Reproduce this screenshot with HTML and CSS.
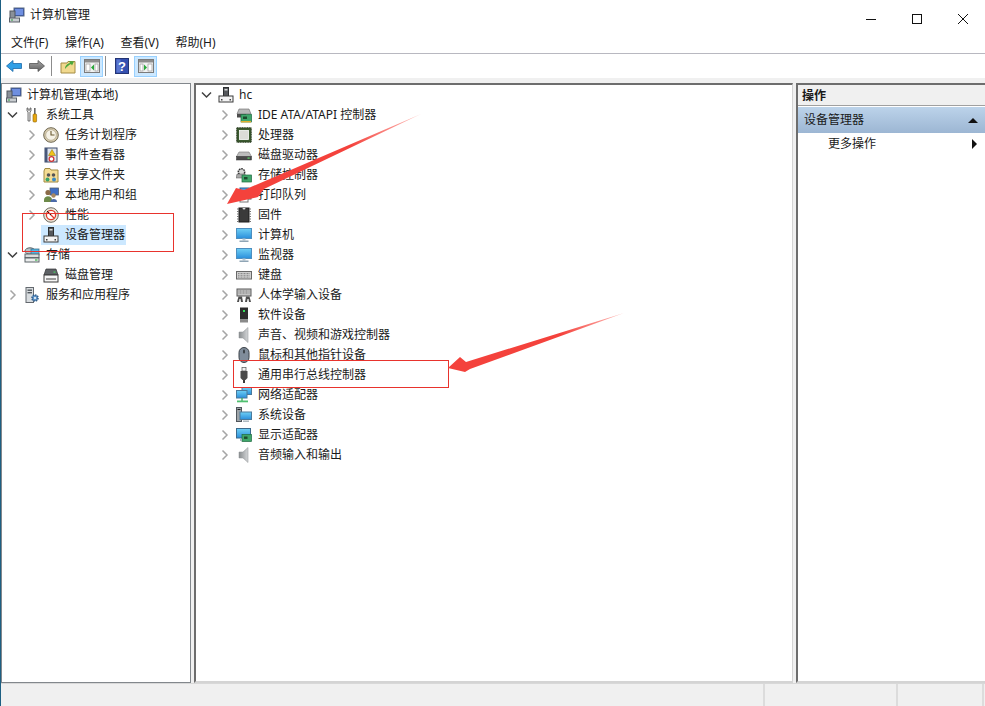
FILE: index.html
```html
<!DOCTYPE html>
<html lang="zh-CN">
<head>
<meta charset="utf-8">
<title>计算机管理</title>
<link rel="stylesheet" href="styles.css">
</head>
<body>
<svg class="defs" width="0" height="0" aria-hidden="true">
  <defs>
    <linearGradient id="gBlue" x1="0" y1="0" x2="0" y2="1"><stop offset="0" stop-color="#6fd0f5"/><stop offset="1" stop-color="#2a8edb"/></linearGradient>
    <linearGradient id="gGray" x1="0" y1="0" x2="0" y2="1"><stop offset="0" stop-color="#a8a8a8"/><stop offset="1" stop-color="#5e5e5e"/></linearGradient>
    <linearGradient id="gSpk" x1="0" y1="0" x2="1" y2="0"><stop offset="0" stop-color="#8a8e90"/><stop offset="1" stop-color="#d4d6d8"/></linearGradient>
    <symbol id="chev-r" viewBox="0 0 19 20"><path d="M5.500 5.500 L10 10 L5.500 14.500" fill="none" stroke="#a6a6a6" stroke-width="1.500"/></symbol>
    <symbol id="chev-d" viewBox="0 0 19 20"><path d="M3 7.500 L7.500 12 L12 7.500" fill="none" stroke="#404040" stroke-width="1.500"/></symbol>
    <symbol id="i-root" viewBox="0 0 16 16"><rect x="5" y="1" width="10" height="8" fill="#2d4fb5" stroke="#5a6a80"/><rect x="6" y="2" width="8" height="6" fill="#6f8fe0"/><rect x="1" y="4" width="5" height="8" fill="#8a9098" stroke="#50565e"/><rect x="0.500" y="11" width="10" height="4" fill="#c8ccd0" stroke="#5a6068"/><rect x="2" y="12.500" width="2" height="1" fill="#30a040"/></symbol>
    <symbol id="i-tools" viewBox="0 0 16 16"><path d="M3 1 v3 l1 1 v9 h2 v-9 l1-1 v-3 l-1 0 v2 h-2 v-2 z" fill="#e8e8e8" stroke="#555" stroke-width=".8"/><rect x="10" y="1" width="1.600" height="6" fill="#666"/><rect x="9" y="7" width="3.600" height="8" rx="1" fill="#e8a810" stroke="#8a6000" stroke-width=".6"/></symbol>
    <symbol id="i-clock" viewBox="0 0 16 16"><circle cx="8" cy="8" r="7.300" fill="#d8cdb0" stroke="#6e6650"/><circle cx="8" cy="8" r="5.300" fill="#f6f2e6" stroke="#a89c80" stroke-width=".6"/><path d="M8 4 V8 H11.500" fill="none" stroke="#6a5a30" stroke-width="1.100"/></symbol>
    <symbol id="i-event" viewBox="0 0 16 16"><rect x="2" y="1" width="12" height="14" fill="#dfe4ee" stroke="#3d4a68"/><rect x="2" y="1" width="2.500" height="14" fill="#47577a"/><path d="M9 2.500 L12.500 8.500 H5.500 Z" fill="#f2c418" stroke="#8a6d00" stroke-width=".5"/><circle cx="8.500" cy="12" r="2.400" fill="#fff" stroke="#d03030" stroke-width="1.200"/></symbol>
    <symbol id="i-share" viewBox="0 0 16 16"><path d="M1 4 V15 H15 V3 H8 L7 1.500 H2 Z" fill="#f4dc94" stroke="#a08a40"/><circle cx="5.500" cy="8" r="1.800" fill="#555"/><circle cx="10.500" cy="8" r="1.800" fill="#555"/><circle cx="4.500" cy="12.500" r="2" fill="#3ba46a"/><circle cx="11" cy="12.500" r="2" fill="#3b8ac4"/></symbol>
    <symbol id="i-users" viewBox="0 0 16 16"><rect x="7" y="1" width="8.500" height="7" fill="#3f6fc4" stroke="#536070" stroke-width=".8"/><circle cx="5" cy="5.500" r="2.600" fill="#8a6a48"/><path d="M1 13 C1 8 9 8 9 13 V15 H1 Z" fill="#6d8a4a"/><circle cx="10.500" cy="8.500" r="2.200" fill="#a88860"/><path d="M7.500 15 C7 11 14.500 11 14 15 Z" fill="#4a6aa8"/></symbol>
    <symbol id="i-perf" viewBox="0 0 16 16"><circle cx="8" cy="8" r="7.300" fill="#ece8dc" stroke="#6e6a60"/><circle cx="8" cy="8" r="4.600" fill="#fff" stroke="#e03a2a" stroke-width="1.300"/><path d="M5 5 L11 11" stroke="#e03a2a" stroke-width="1.300"/><path d="M4 4 L8 8" stroke="#222" stroke-width="1"/></symbol>
    <symbol id="i-devmgr" viewBox="0 0 16 16"><rect x="5.500" y="0.500" width="5" height="9" fill="#55585c" stroke="#2c2e30"/><rect x="6.500" y="2" width="3" height="1.500" fill="#d8d8d8"/><rect x="1" y="9" width="14" height="6" fill="#f4f4f4" stroke="#3a3a3a"/><rect x="3" y="12" width="1.500" height="1.500" fill="#444"/><rect x="11.500" y="12" width="1.500" height="1.500" fill="#444"/></symbol>
    <symbol id="i-storage" viewBox="0 0 16 16"><ellipse cx="6" cy="4" rx="5" ry="3.200" fill="#b8c4c8" stroke="#5c6468"/><rect x="7" y="2" width="8" height="6" fill="#4db8e8" stroke="#41708a" stroke-width=".8"/><rect x="1" y="7" width="14" height="3.600" fill="#d8dcdc" stroke="#5c6468"/><rect x="1" y="11" width="14" height="4" fill="#eceeee" stroke="#5c6468"/><rect x="11" y="12.400" width="2.500" height="1.200" fill="#38b048"/></symbol>
    <symbol id="i-disk" viewBox="0 0 16 16"><path d="M3 2 H13 L15 8 H1 Z" fill="#5e6266" stroke="#303234" stroke-width=".7"/><rect x="10.500" y="4.500" width="2" height="1.200" fill="#46d060"/><rect x="1" y="8" width="14" height="7" fill="#f6f6f6" stroke="#3a3a3a"/><rect x="3" y="11" width="10" height="2" fill="#9a9a9a"/></symbol>
    <symbol id="i-svc" viewBox="0 0 16 16"><rect x="2" y="0.500" width="7.500" height="15" fill="#d8dcdf" stroke="#63686e"/><rect x="3.500" y="2.500" width="4.500" height="1.400" fill="#50565c"/><rect x="3.500" y="5" width="4.500" height="1.400" fill="#50565c"/><circle cx="11" cy="11" r="3" fill="#5d93c8" stroke="#34608c" stroke-width="1.600" stroke-dasharray="1.500 .8"/><circle cx="11" cy="11" r="1" fill="#fff"/></symbol>
    <symbol id="i-ide" viewBox="0 0 16 16"><path d="M3 2 H13 L15 7 H1 Z" fill="#b8b8b8" stroke="#666" stroke-width=".6"/><rect x="1" y="7" width="9" height="3.500" fill="#4c4c4c"/><rect x="5" y="7.500" width="10.500" height="7.500" fill="#3fa66a" stroke="#1f6a40" stroke-width=".7"/><rect x="7" y="9.500" width="4" height="2.500" fill="#1c4a2e"/><rect x="5" y="14" width="10" height="1.400" fill="#e0b030"/></symbol>
    <symbol id="i-cpu" viewBox="0 0 16 16"><rect x="0.800" y="0.800" width="14.400" height="14.400" fill="#3c5a30" stroke="#22341a" stroke-dasharray="1.200 .5"/><rect x="3.500" y="3.500" width="9" height="9" fill="#dcdcd8" stroke="#fff" stroke-width=".8"/></symbol>
    <symbol id="i-drive" viewBox="0 0 16 16"><path d="M3 5 H13 L15.500 9.500 H0.500 Z" fill="#bcbcbc" stroke="#777" stroke-width=".6"/><rect x="0.500" y="9.500" width="15" height="3.500" fill="#4a4a4a" stroke="#333" stroke-width=".5"/><rect x="11.500" y="10.500" width="2.200" height="1.200" fill="#5ee06a"/></symbol>
    <symbol id="i-sctrl" viewBox="0 0 16 16"><circle cx="5.500" cy="5" r="3.200" fill="#d8d8d8" stroke="#333" stroke-width="1.500" stroke-dasharray="1.600 .8"/><path d="M1 7 H9 L10 11 H0 Z" fill="#a8a8a8" stroke="#555" stroke-width=".5"/><rect x="6" y="8" width="9.500" height="7" fill="#3fa66a" stroke="#1f6a40" stroke-width=".7"/><rect x="8" y="10" width="3.500" height="2.400" fill="#1c4a2e"/></symbol>
    <symbol id="i-print" viewBox="0 0 16 16"><rect x="4" y="1" width="9" height="5" fill="#4aa0e8" stroke="#2a5e94"/><rect x="1" y="6" width="14" height="6" fill="#b0b8c0" stroke="#555"/><rect x="4" y="11" width="8" height="4" fill="#fff" stroke="#777"/></symbol>
    <symbol id="i-chip" viewBox="0 0 16 16"><rect x="3" y="1" width="10" height="14" fill="#3a3a3a" stroke="#1c1c1c"/><path d="M1 2 H3 M1 4.500 H3 M1 7 H3 M1 9.500 H3 M1 12 H3 M1 14.500 H3 M13 2 H15 M13 4.500 H15 M13 7 H15 M13 9.500 H15 M13 12 H15 M13 14.500 H15" stroke="#777" stroke-width="1.100"/><path d="M6.500 1 a1.500 1.500 0 0 0 3 0 z" fill="#ddd"/></symbol>
    <symbol id="i-pc" viewBox="0 0 16 16"><rect x="0.500" y="1.500" width="15" height="10" fill="url(#gBlue)" stroke="#4d8fc0"/><path d="M6.500 11.500 H9.500 V13.500 H6.500 Z" fill="#b8c8d4"/><rect x="3.500" y="13.500" width="9" height="1.500" fill="#8fa5b5"/></symbol>
    <symbol id="i-kbd" viewBox="0 0 16 16"><rect x="0.500" y="4.500" width="15" height="7.500" fill="#d0d0d0" stroke="#686868"/><path d="M2 6.500 H14 M2 8.300 H14 M2 10.100 H14" stroke="#8a8a8a" stroke-width="1" stroke-dasharray="1 .5"/></symbol>
    <symbol id="i-hid" viewBox="0 0 16 16"><rect x="1" y="2" width="14" height="7" fill="#c4c4c4" stroke="#5a5a5a"/><path d="M2.500 4 H13.500 M2.500 6 H13.500" stroke="#808080" stroke-dasharray="1 .5"/><path d="M1 15 L2.500 9.500 H6 L7 15 H5 L4.500 12 H3.500 L3 15 Z" fill="#4e4e4e"/><path d="M9 15 L10 9.500 H13.500 L15 15 H13 L12.500 12 H11.500 L11 15 Z" fill="#4e4e4e"/></symbol>
    <symbol id="i-soft" viewBox="0 0 16 16"><rect x="4" y="0.500" width="8" height="12" fill="#2e2e2e"/><rect x="7" y="3" width="2" height="2" fill="#35e05a"/><rect x="4" y="12.500" width="8" height="3" fill="#8a8a8a"/></symbol>
    <symbol id="i-spk" viewBox="0 0 16 16"><path d="M3 5 H7 L12 0.500 V15.500 L7 11 H3 Z" fill="url(#gSpk)" stroke="#8a8e90" stroke-width=".5"/></symbol>
    <symbol id="i-mouse" viewBox="0 0 16 16"><rect x="3" y="0.500" width="10" height="15" rx="5" fill="#7f8c9a" stroke="#3c4248"/><rect x="7" y="2.500" width="2" height="4" rx="1" fill="#3c4248"/></symbol>
    <symbol id="i-usb" viewBox="0 0 16 16"><rect x="6" y="0.500" width="4" height="3.500" fill="#f2f2f2" stroke="#555" stroke-width=".7"/><path d="M4.500 4 H11.500 V11 L9.500 13 H6.500 L4.500 11 Z" fill="#4a4a4a"/><rect x="7" y="13" width="2" height="3" fill="#3a3a3a"/></symbol>
    <symbol id="i-net" viewBox="0 0 16 16"><rect x="6" y="0.500" width="9.500" height="7" fill="url(#gBlue)" stroke="#4a7a9c"/><rect x="0.500" y="3.500" width="10.500" height="7.500" fill="url(#gBlue)" stroke="#4a7a9c"/><path d="M6 11 V14" stroke="#40b060" stroke-width="1.400"/><rect x="1" y="13.500" width="11" height="1.800" fill="#50c070"/></symbol>
    <symbol id="i-sys" viewBox="0 0 16 16"><rect x="0.500" y="0.500" width="5" height="14" fill="#9ea4a8" stroke="#50565c"/><rect x="1.500" y="2" width="3" height="1" fill="#222"/><rect x="4" y="5" width="11.500" height="7.500" fill="url(#gBlue)" stroke="#4a7a9c"/><rect x="7" y="13.500" width="6" height="1.400" fill="#a8b4bc"/></symbol>
    <symbol id="i-disp" viewBox="0 0 16 16"><rect x="0.500" y="1.500" width="14" height="9.500" fill="url(#gBlue)" stroke="#3c6a8c"/><rect x="6" y="7.500" width="9.500" height="7" fill="#3fa66a" stroke="#1f6a40" stroke-width=".7"/><rect x="8" y="9.500" width="3.500" height="2.400" fill="#1c4a2e"/><rect x="4" y="12" width="2" height="2" fill="#a8b4bc"/></symbol>
  </defs>
</svg>

<div class="app">
  <header class="titlebar">
    <svg class="ico title-ico"><use href="#i-root"/></svg>
    <span class="title-text">计算机管理</span>
    <div class="winbtns">
      <svg class="winbtn" viewBox="0 0 46 20"><path d="M18 14.500 H28" stroke="#111" fill="none"/></svg>
      <svg class="winbtn" viewBox="0 0 46 20"><rect x="18.500" y="9.500" width="9" height="9" fill="none" stroke="#111"/></svg>
      <svg class="winbtn" viewBox="0 0 46 20"><path d="M18 9 L28 19 M28 9 L18 19" fill="none" stroke="#111"/></svg>
    </div>
  </header>
  <nav class="menubar">
    <span>文件(F)</span><span>操作(A)</span><span>查看(V)</span><span>帮助(H)</span>
  </nav>
  <div class="toolbar">
    <svg class="tool" viewBox="0 0 16 16"><path d="M0.500 8 L7 2.500 V5.500 H15.500 V10.500 H7 V13.500 Z" fill="#2f9fe6" stroke="#1c6aa8" stroke-width=".8"/></svg>
    <svg class="tool tool-fwd" viewBox="0 0 16 16"><path d="M15.500 8 L9 2.500 V5.500 H0.500 V10.500 H9 V13.500 Z" fill="url(#gGray)" stroke="#555" stroke-width=".8"/></svg>
    <i class="tsep"></i>
    <svg class="tool tool-up" viewBox="0 0 16 16"><path d="M1 5 H7 L8 3.500 H15 V15 H1 Z" fill="#f1d98e" stroke="#a48c44"/><path d="M5 11 C5 7 8 5.500 10 5 L9 3 L14 3.500 L12 7.500 L11 6 C9 7 7 8.500 5 11 Z" fill="#4aa83c"/></svg>
    <span class="tbtn tbtn-a"><svg class="tool" viewBox="0 0 16 16"><rect x="0.500" y="1.500" width="15" height="13" fill="#f2f2f2" stroke="#7b7b7b"/><rect x="1" y="2" width="14" height="2.500" fill="#8d8d8d"/><rect x="2" y="6" width="4" height="7" fill="#fff" stroke="#999" stroke-width=".7"/><rect x="11" y="6" width="3" height="7" fill="#fff" stroke="#999" stroke-width=".7"/><path d="M10 6.500 L7 9.500 L10 12.500 Z" fill="#29a83a"/></svg></span>
    <i class="tsep tsep-b"></i>
    <svg class="tool tool-help" viewBox="0 0 16 16"><rect x="1.500" y="0.500" width="13" height="15" fill="#3550b0" stroke="#233474"/><rect x="2.500" y="1.500" width="4" height="13" fill="#5a76cf"/><text x="8" y="12.500" class="help-q">?</text></svg>
    <span class="tbtn tbtn-b"><svg class="tool" viewBox="0 0 16 16"><rect x="0.500" y="1.500" width="15" height="13" fill="#f2f2f2" stroke="#7b7b7b"/><rect x="1" y="2" width="14" height="2.500" fill="#8d8d8d"/><rect x="2" y="6" width="3" height="7" fill="#fff" stroke="#999" stroke-width=".7"/><rect x="10" y="6" width="4" height="7" fill="#fff" stroke="#999" stroke-width=".7"/><path d="M6 6.500 L9 9.500 L6 12.500 Z" fill="#29a83a"/></svg></span>
  </div>

  <main class="panes">
    <section class="pane pane-left">
      <div class="row l0"><svg class="ico"><use href="#i-root"/></svg><span>计算机管理(本地)</span></div>
      <div class="row l1"><svg class="tw"><use href="#chev-d"/></svg><svg class="ico"><use href="#i-tools"/></svg><span>系统工具</span></div>
      <div class="row l2"><svg class="tw"><use href="#chev-r"/></svg><svg class="ico"><use href="#i-clock"/></svg><span>任务计划程序</span></div>
      <div class="row l2"><svg class="tw"><use href="#chev-r"/></svg><svg class="ico"><use href="#i-event"/></svg><span>事件查看器</span></div>
      <div class="row l2"><svg class="tw"><use href="#chev-r"/></svg><svg class="ico"><use href="#i-share"/></svg><span>共享文件夹</span></div>
      <div class="row l2"><svg class="tw"><use href="#chev-r"/></svg><svg class="ico"><use href="#i-users"/></svg><span>本地用户和组</span></div>
      <div class="row l2"><svg class="tw"><use href="#chev-r"/></svg><svg class="ico"><use href="#i-perf"/></svg><span>性能</span></div>
      <div class="row l2"><i class="tw"></i><span class="sel"><svg class="ico"><use href="#i-devmgr"/></svg><span>设备管理器</span></span></div>
      <div class="row l1"><svg class="tw"><use href="#chev-d"/></svg><svg class="ico"><use href="#i-storage"/></svg><span>存储</span></div>
      <div class="row l2"><i class="tw"></i><svg class="ico"><use href="#i-disk"/></svg><span>磁盘管理</span></div>
      <div class="row l1"><svg class="tw"><use href="#chev-r"/></svg><svg class="ico"><use href="#i-svc"/></svg><span>服务和应用程序</span></div>
    </section>

    <section class="pane pane-mid">
      <div class="row m0"><svg class="tw"><use href="#chev-d"/></svg><svg class="ico"><use href="#i-devmgr"/></svg><span>hc</span></div>
      <div class="row m1"><svg class="tw"><use href="#chev-r"/></svg><svg class="ico"><use href="#i-ide"/></svg><span>IDE ATA/ATAPI 控制器</span></div>
      <div class="row m1"><svg class="tw"><use href="#chev-r"/></svg><svg class="ico"><use href="#i-cpu"/></svg><span>处理器</span></div>
      <div class="row m1"><svg class="tw"><use href="#chev-r"/></svg><svg class="ico"><use href="#i-drive"/></svg><span>磁盘驱动器</span></div>
      <div class="row m1"><svg class="tw"><use href="#chev-r"/></svg><svg class="ico"><use href="#i-sctrl"/></svg><span>存储控制器</span></div>
      <div class="row m1"><svg class="tw"><use href="#chev-r"/></svg><svg class="ico"><use href="#i-print"/></svg><span>打印队列</span></div>
      <div class="row m1"><svg class="tw"><use href="#chev-r"/></svg><svg class="ico"><use href="#i-chip"/></svg><span>固件</span></div>
      <div class="row m1"><svg class="tw"><use href="#chev-r"/></svg><svg class="ico"><use href="#i-pc"/></svg><span>计算机</span></div>
      <div class="row m1"><svg class="tw"><use href="#chev-r"/></svg><svg class="ico"><use href="#i-pc"/></svg><span>监视器</span></div>
      <div class="row m1"><svg class="tw"><use href="#chev-r"/></svg><svg class="ico"><use href="#i-kbd"/></svg><span>键盘</span></div>
      <div class="row m1"><svg class="tw"><use href="#chev-r"/></svg><svg class="ico"><use href="#i-hid"/></svg><span>人体学输入设备</span></div>
      <div class="row m1"><svg class="tw"><use href="#chev-r"/></svg><svg class="ico"><use href="#i-soft"/></svg><span>软件设备</span></div>
      <div class="row m1"><svg class="tw"><use href="#chev-r"/></svg><svg class="ico"><use href="#i-spk"/></svg><span>声音、视频和游戏控制器</span></div>
      <div class="row m1"><svg class="tw"><use href="#chev-r"/></svg><svg class="ico"><use href="#i-mouse"/></svg><span>鼠标和其他指针设备</span></div>
      <div class="row m1"><svg class="tw"><use href="#chev-r"/></svg><svg class="ico"><use href="#i-usb"/></svg><span>通用串行总线控制器</span></div>
      <div class="row m1"><svg class="tw"><use href="#chev-r"/></svg><svg class="ico"><use href="#i-net"/></svg><span>网络适配器</span></div>
      <div class="row m1"><svg class="tw"><use href="#chev-r"/></svg><svg class="ico"><use href="#i-sys"/></svg><span>系统设备</span></div>
      <div class="row m1"><svg class="tw"><use href="#chev-r"/></svg><svg class="ico"><use href="#i-disp"/></svg><span>显示适配器</span></div>
      <div class="row m1"><svg class="tw"><use href="#chev-r"/></svg><svg class="ico"><use href="#i-spk"/></svg><span>音频输入和输出</span></div>
    </section>

    <aside class="pane pane-right">
      <div class="act-head">操作</div>
      <div class="act-group"><span>设备管理器</span><i class="tri-up"></i></div>
      <div class="act-item"><span>更多操作</span><i class="tri-right"></i></div>
    </aside>
  </main>

  <footer class="statusbar">
    <i class="cell cell-main"></i><i class="cell cell-b"></i><i class="cell cell-c"></i>
  </footer>

  <div class="redbox box-a"></div>
  <div class="redbox box-b"></div>
  <svg class="arrows" viewBox="0 0 985 706">
    <defs>
      <linearGradient id="fadeA" gradientUnits="userSpaceOnUse" x1="421" y1="114" x2="350" y2="146"><stop offset="0" stop-color="#ffc0bc"/><stop offset="1" stop-color="#f4423c"/></linearGradient>
      <linearGradient id="fadeB" gradientUnits="userSpaceOnUse" x1="624" y1="313" x2="560" y2="333"><stop offset="0" stop-color="#ffc0bc"/><stop offset="1" stop-color="#f4423c"/></linearGradient>
    </defs>
    <path d="M227 204 L236 188 L244 190 L421 114 L264 189 L258 197 Z" fill="url(#fadeA)"/>
    <path d="M448 368 L460 357 L466 362 L624 313 L470 369 L465 372 Z" fill="url(#fadeB)"/>
  </svg>
</div>
</body>
</html>
```

FILE: styles.css
```css
* { box-sizing: border-box; }
html, body { margin: 0; height: 100%; }
body {
  background: #fff;
  font: 12px/20px "Noto Sans", "Noto Sans CJK SC", sans-serif;
  color: #1a1a1a;
  overflow: hidden;
}
.defs { position: absolute; }
.app {
  position: relative;
  width: 985px;
  height: 706px;
  display: flex;
  flex-direction: column;
  border-left: 1px solid #1d5f82;
}
.ico { width: 16px; height: 16px; flex: none; }

.titlebar { height: 30px; display: flex; align-items: center; padding-left: 8px; flex: none; }
.title-text { margin-left: 5px; }
.winbtns { margin-left: auto; display: flex; margin-top: -1px; margin-right: -1px; }
.winbtn { width: 46px; height: 20px; }

.menubar {
  height: 24px;
  flex: none;
  display: flex;
  gap: 16.600px;
  align-items: center;
  padding: 2px 0 0 10px;
  border-bottom: 1px solid #b8b8c0;
}

.toolbar { height: 24px; flex: none; display: flex; align-items: center; padding-left: 5px; background: #fff; }
.tool { width: 16px; height: 16px; flex: none; display: block; }
.tool-fwd { margin-left: 7px; }
.tsep { width: 1px; height: 20px; background: #8c8c8c; margin-left: 6px; }
.tool-up { margin-left: 8px; }
.tbtn {
  width: 23px; height: 21px; display: flex; align-items: center; justify-content: center;
  background: #cce8ff; border: 1px solid #99d1ff; flex: none;
}
.tbtn-a { margin-left: 4px; }
.tsep-b { margin-left: 2px; }
.tool-help { margin-left: 8px; }
.tbtn-b { margin-left: 4px; }
.help-q { font: bold 13px "Liberation Sans", sans-serif; fill: #fff; text-anchor: middle; }

.panes { flex: 1; min-height: 0; display: flex; background: #f0f0f0; padding-top: 5px; }
.pane { background: #fff; flex: none; }
.pane-left { width: 190px; border: 1px solid #82878c; padding-top: 1px; }
.pane-mid {
  width: 599px; margin-left: 3px;
  border-left: 2px solid #6d6d6d; border-top: 2px solid #6d6d6d;
  border-right: 1px solid #d4d4d4; border-bottom: 2px solid #d4d4d4;
}
.pane-right {
  flex: 1; margin-left: 3px;
  border-left: 2px solid #6d6d6d; border-top: 2px solid #6d6d6d;
  border-bottom: 2px solid #d4d4d4;
}

.row { height: 20px; display: flex; align-items: center; white-space: nowrap; }
.row .ico { margin-right: 6px; }
.row.l0 .ico, .row.m0 .ico { margin-right: 5px; }
.tw { width: 19px; height: 20px; flex: none; display: block; }
.l0 { padding-left: 4px; }
.l1 { padding-left: 3px; }
.l2 { padding-left: 22px; }
.m0 { padding-left: 3px; }
.m1 { padding-left: 21px; }
.sel { display: flex; align-items: center; background: #cce8ff; height: 20px; margin-left: -2px; padding-left: 2px; padding-right: 1px; }

.act-head { height: 21px; background: #f0f0f0; border-bottom: 1px solid #a0a0a0; padding-left: 4px; line-height: 21px; font-weight: 700; }
.act-group {
  height: 26px; margin-top: 1px; display: flex; align-items: center; justify-content: space-between;
  padding: 0 7px 0 6px;
  background: linear-gradient(#bcd3ea, #9cb6d3);
}
.tri-up { width: 0; height: 0; border-left: 5px solid transparent; border-right: 5px solid transparent; border-bottom: 5px solid #111; }
.act-item { height: 22px; display: flex; align-items: center; justify-content: space-between; padding: 0 8px 0 30px; }
.tri-right { width: 0; height: 0; border-top: 5px solid transparent; border-bottom: 5px solid transparent; border-left: 5px solid #111; }

.statusbar { height: 23px; flex: none; display: flex; background: #f0f0f0; border-top: 1px solid #d8d8d8; }
.cell { display: block; height: 100%; border-right: 2px solid #dcdcdc; }
.cell-main { width: 764px; }
.cell-b { width: 133px; }
.cell-c { width: 86px; }

.redbox { position: absolute; border: 1px solid #e8332d; pointer-events: none; }
.box-a { left: 21px; top: 213px; width: 152px; height: 39px; }
.box-b { left: 232px; top: 360px; width: 216px; height: 28px; }
.arrows { position: absolute; left: -1px; top: 0; width: 985px; height: 706px; pointer-events: none; }
```
